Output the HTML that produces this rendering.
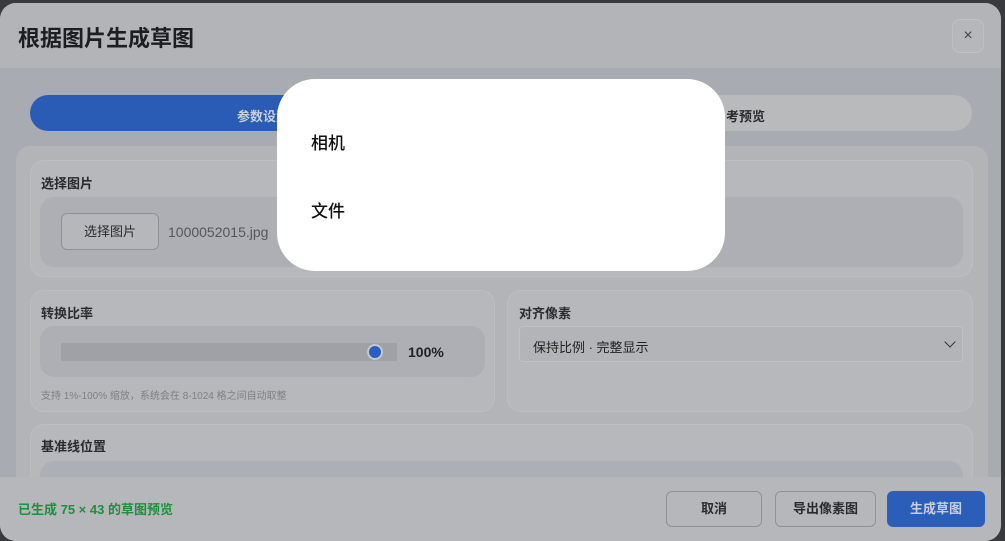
<!DOCTYPE html>
<html><head><meta charset="utf-8"><style>
*{box-sizing:border-box;margin:0;padding:0}
body{width:1005px;height:541px;overflow:hidden;background:#3a3a3d;font-family:"Liberation Sans","Noto Sans CJK SC",sans-serif;position:relative}
.a{position:absolute}
.modal{left:0;top:3px;width:1001px;height:538px;background:#a8abb2;border-radius:16px;overflow:hidden}
.hdr{left:0;top:0;width:1001px;height:65px;background:#b3b4b7}
.card{background:#b7b8bb;border:1px solid #bdbec1;border-radius:14px}
.field{background:#adafb5;border-radius:14px}
.lbl{font-size:13px;color:#2a2b2e;font-weight:bold}
.btn{border:1px solid #8e9298;border-radius:6px;background:#b6b7ba;font-size:13px;color:#2a2b2e;text-align:center;font-weight:bold}
</style></head><body>
<div class="a modal">
 <div class="a hdr">
  <div class="a" style="left:18px;top:18px;font-size:22px;font-weight:bold;color:#1d1e21">根据图片生成草图</div>
  <div class="a" style="left:952px;top:16px;width:32px;height:34px;border:1px solid #c0c1c3;border-radius:8px;background:#b6b7ba;text-align:center;line-height:32px;color:#444;font-size:16px">×</div>
 </div>
 <div class="a" style="left:30px;top:92px;width:942px;height:36px;border-radius:18px;background:#b9babc"></div>
 <div class="a" style="left:30px;top:92px;width:480px;height:36px;border-radius:18px;background:#2b5cb5"></div>
 <div class="a" style="left:237px;top:103px;font-size:13px;color:#c8cfdc;font-weight:bold">参数设置</div>
 <div class="a" style="left:726px;top:103px;font-size:13px;color:#2a2b2e;font-weight:bold">考预览</div>
 <div class="a" style="left:16px;top:143px;width:972px;height:400px;border-radius:14px;background:#b3b4b7"></div>
 <div class="a card" style="left:30px;top:157px;width:943px;height:117px"></div>
 <div class="a lbl" style="left:41px;top:170px">选择图片</div>
 <div class="a field" style="left:40px;top:194px;width:923px;height:70px"></div>
 <div class="a btn" style="left:61px;top:210px;width:98px;height:37px;line-height:35px;font-weight:normal">选择图片</div>
 <div class="a" style="left:168px;top:221px;font-size:14px;color:#55575c">1000052015.jpg</div>
 <div class="a card" style="left:30px;top:287px;width:465px;height:122px"></div>
 <div class="a lbl" style="left:41px;top:300px">转换比率</div>
 <div class="a field" style="left:40px;top:323px;width:445px;height:51px"></div>
 <div class="a" style="left:61px;top:340px;width:336px;height:18px;background:#9fa1a5"></div>
 <div class="a" style="left:367px;top:341px;width:16px;height:16px;border-radius:50%;background:#2a5fc2;border:2px solid #c6c8cc"></div>
 <div class="a" style="left:408px;top:341px;font-size:14px;font-weight:bold;color:#222">100%</div>
 <div class="a" style="left:41px;top:384px;font-size:10px;color:#7d8085">支持 1%-100% 缩放，系统会在 8-1024 格之间自动取整</div>
 <div class="a card" style="left:507px;top:287px;width:466px;height:122px"></div>
 <div class="a lbl" style="left:519px;top:300px">对齐像素</div>
 <div class="a" style="left:519px;top:323px;width:444px;height:36px;border:1px solid #c0c1c4;border-radius:4px;background:#b3b4b7"></div>
 <div class="a" style="left:533px;top:334px;font-size:13px;color:#222">保持比例 · 完整显示</div>
 <div class="a" style="left:946px;top:335px;width:8px;height:8px;border-right:1.5px solid #333;border-bottom:1.5px solid #333;transform:rotate(45deg)"></div>
 <div class="a card" style="left:30px;top:421px;width:943px;height:120px"></div>
 <div class="a lbl" style="left:41px;top:433px">基准线位置</div>
 <div class="a field" style="left:40px;top:458px;width:923px;height:60px;background:#adafb6"></div>
 <div class="a" style="left:0;top:474px;width:1001px;height:64px;background:#b6b7ba"></div>
 <div class="a" style="left:18px;top:496px;font-size:13px;color:#1f8f3c;font-weight:bold">已生成 75 × 43 的草图预览</div>
 <div class="a btn" style="left:666px;top:488px;width:96px;height:36px;line-height:34px">取消</div>
 <div class="a btn" style="left:775px;top:488px;width:101px;height:36px;line-height:34px">导出像素图</div>
 <div class="a btn" style="left:887px;top:488px;width:98px;height:36px;line-height:34px;background:#2b5eb9;border-color:#2b5eb9;color:#c7cfdd">生成草图</div>
</div>
<div class="a" style="left:277px;top:79px;width:448px;height:192px;background:#fff;border-radius:38px"></div>
<div class="a" style="left:311px;top:129px;font-size:17px;color:#111;font-weight:500">相机</div>
<div class="a" style="left:311px;top:197px;font-size:17px;color:#111;font-weight:500">文件</div>
</body></html>
